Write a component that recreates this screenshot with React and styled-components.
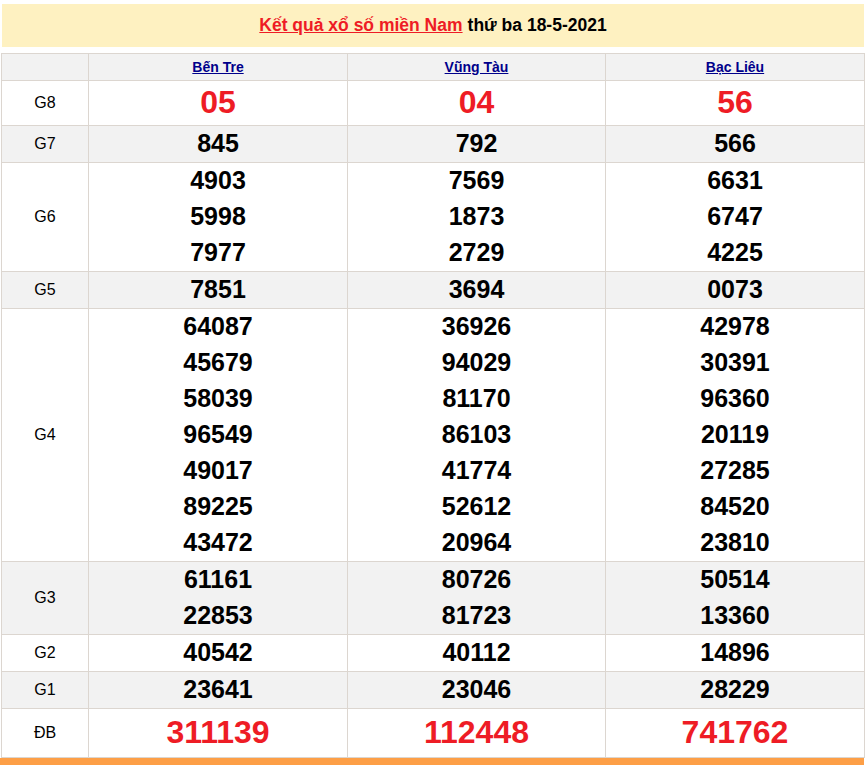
import styled, { createGlobalStyle } from 'styled-components';

const GlobalStyle = createGlobalStyle`
  html, body {
    margin: 0;
    padding: 0;
    background: #fff;
    font-family: "Liberation Sans", Arial, sans-serif;
  }
`;

const Page = styled.div`
  width: 864px;
  padding-top: 4px;
`;

const TitleBar = styled.div`
  margin: 0 0 6px 2px;
  width: 862px;
  height: 43px;
  background: #fef1c1;
  display: flex;
  align-items: center;
  justify-content: center;
  font-size: 17.5px;
  font-weight: bold;
  color: #000;
`;

const TitleLink = styled.a`
  color: #ee1c25;
  text-decoration: underline;
  margin-right: 5px;
`;

const Table = styled.table`
  margin-left: 1px;
  width: 863px;
  border-collapse: collapse;
  table-layout: fixed;
`;

const Row = styled.tr`
  background: ${(p) => (p.$alt ? '#f2f2f2' : '#fff')};
`;

const HeadCell = styled.th`
  border: 1px solid #dcd6d0;
  height: 26px;
  padding: 0;
  font-size: 14px;
  font-weight: bold;
  text-align: center;
  vertical-align: middle;
`;

const Station = styled.a`
  color: #00008b;
  text-decoration: underline;
`;

const Label = styled.td`
  border: 1px solid #dcd6d0;
  padding: 0;
  font-size: 16px;
  color: #000;
  text-align: center;
  vertical-align: middle;
`;

const Cell = styled.td`
  border: 1px solid #dcd6d0;
  padding: 0;
  text-align: center;
  vertical-align: middle;
`;

// line box is 2px short of the row step; the padding keeps the step and lifts the digits a touch
const Num = styled.div`
  font-weight: bold;
  font-size: ${(p) => (p.$big ? '32px' : '25px')};
  line-height: ${(p) => (p.$lh || 36) - 2}px;
  padding-bottom: 2px;
  color: ${(p) => (p.$big ? '#ee1c25' : '#000')};
`;

const Bottom = styled.div`
  width: 864px;
  height: 8px;
  background: #fd9f47;
`;

const stations = ['Bến Tre', 'Vũng Tàu', 'Bạc Liêu'];

const prizes = [
  { name: 'G8', big: true, lh: 44, vals: [['05'], ['04'], ['56']] },
  { name: 'G7', vals: [['845'], ['792'], ['566']] },
  {
    name: 'G6',
    vals: [
      ['4903', '5998', '7977'],
      ['7569', '1873', '2729'],
      ['6631', '6747', '4225'],
    ],
  },
  { name: 'G5', vals: [['7851'], ['3694'], ['0073']] },
  {
    name: 'G4',
    vals: [
      ['64087', '45679', '58039', '96549', '49017', '89225', '43472'],
      ['36926', '94029', '81170', '86103', '41774', '52612', '20964'],
      ['42978', '30391', '96360', '20119', '27285', '84520', '23810'],
    ],
  },
  {
    name: 'G3',
    vals: [
      ['61161', '22853'],
      ['80726', '81723'],
      ['50514', '13360'],
    ],
  },
  { name: 'G2', vals: [['40542'], ['40112'], ['14896']] },
  { name: 'G1', vals: [['23641'], ['23046'], ['28229']] },
  { name: 'ĐB', big: true, lh: 48, vals: [['311139'], ['112448'], ['741762']] },
];

export default function App() {
  return (
    <Page>
      <GlobalStyle />
      <TitleBar>
        <TitleLink href="#">Kết quả xổ số miền Nam</TitleLink>
        thứ ba 18-5-2021
      </TitleBar>
      <Table>
        <colgroup>
          <col style={{ width: 87 }} />
          <col style={{ width: 259 }} />
          <col style={{ width: 258 }} />
          <col style={{ width: 259 }} />
        </colgroup>
        <tbody>
          <Row $alt>
            <HeadCell />
            {stations.map((s) => (
              <HeadCell key={s}>
                <Station href="#">{s}</Station>
              </HeadCell>
            ))}
          </Row>
          {prizes.map((p, i) => (
            <Row key={p.name} $alt={i % 2 === 1}>
              <Label>{p.name}</Label>
              {p.vals.map((list, j) => (
                <Cell key={j}>
                  {list.map((v) => (
                    <Num key={v} $big={p.big} $lh={p.lh}>
                      {v}
                    </Num>
                  ))}
                </Cell>
              ))}
            </Row>
          ))}
        </tbody>
      </Table>
      <Bottom />
    </Page>
  );
}
